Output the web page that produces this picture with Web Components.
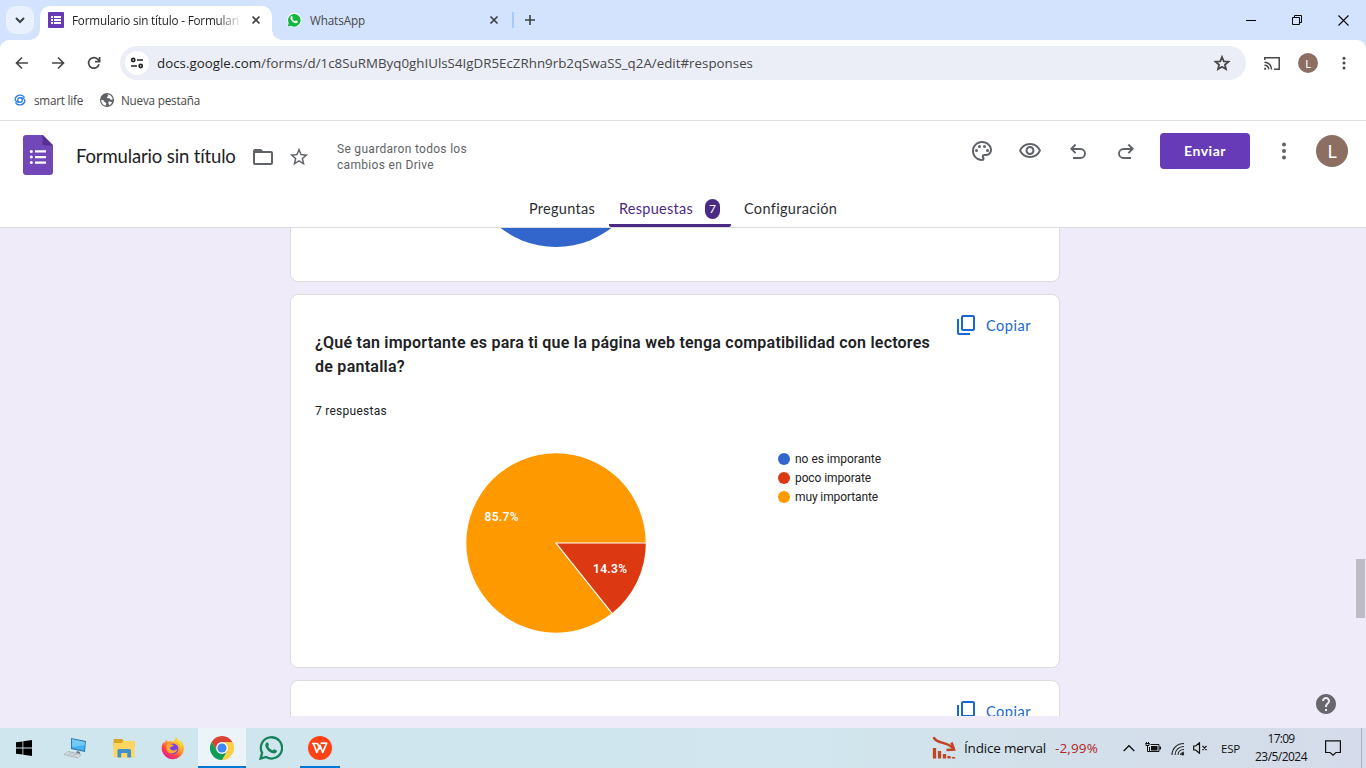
<!DOCTYPE html>
<html lang="es">
<head>
<meta charset="utf-8">
<title>Formulario sin título - Formularios de Google</title>
<style>
html,body{margin:0;height:100%;overflow:hidden}
body{font-family:"Open Sans","Noto Sans",sans-serif;color:#202124}
</style>
</head>
<body>
<desktop-screen></desktop-screen>
<script>
const ICONS = {
  down:['0 0 14 14','<path d="M3 5l4 4 4-4" fill="none" stroke="currentColor" stroke-width="2"/>'],
  formsSmall:['0 0 16 16','<rect width="16" height="16" rx="1" fill="#673ab7"/><path d="M3 4h2v2H3zM6 4h7v2H6zM3 7h2v2H3zM6 7h7v2H6zM3 10h2v2H3zM6 10h7v2H6z" fill="#fff"/>'],
  close:['0 0 10 10','<path d="M1.5 1.5l7 7M8.500 1.500l-7 7" stroke="currentColor" stroke-width="1.7"/>'],
  wa:['0 0 16 16','<path d="M1 15.500l1.100-4A7.200 7.200 0 1 1 5 14.300z" fill="#fff"/><path d="M1.700 14.600l1-3.500A6.300 6.300 0 1 1 5.100 13.700z" fill="#12b83c"/><path d="M5.300 4.300c.7-.6 1 0 1.500 1.300.2.500-.6.900-.4 1.300.6 1.100 1.400 1.800 2.500 2.300.6.200.8-.8 1.300-.7l1.500.8c.4.200-.1 1.800-1.600 1.900-2.100.1-5.400-2.600-5.700-5 0-.8.400-1.400.9-1.900z" fill="#fff"/>'],
  plus:['0 0 12 12','<path d="M6 1v10M1 6h10" stroke="currentColor" stroke-width="1.600"/>'],
  min:['0 0 10 10','<path d="M0 5.500h10" stroke="#000"/>'],
  restore:['0 0 10 10','<path d="M.5 2.500h7v7h-7zM2.500 2.500v-2h7v7h-2" fill="none" stroke="#000"/>'],
  xwin:['0 0 11 11','<path d="M.5.500l10 10M10.500.500l-10 10" stroke="#000" stroke-width="1.100"/>'],
  back:['0 0 14 14','<path d="M13 7H2M7 1.500L1.500 7 7 12.500" fill="none" stroke="currentColor" stroke-width="1.700"/>'],
  fwd:['0 0 14 14','<path d="M1 7h11M7 1.500L12.500 7 7 12.500" fill="none" stroke="currentColor" stroke-width="1.700"/>'],
  reload:['0 0 14 14','<path d="M12 8.300A5.300 5.300 0 1 1 10.800 3.300L12.300 5M12.600 1v4.600H8" fill="none" stroke="currentColor" stroke-width="1.700"/>'],
  tune:['0 0 14 12','<g fill="none" stroke="#222" stroke-width="1.700"><circle cx="3.200" cy="3" r="1.600"/><path d="M7 3h6M1 9h6"/><circle cx="10.700" cy="9" r="1.600"/></g>'],
  star:['0 0 24 24','<path fill="currentColor" d="M22 9.240l-7.190-.62L12 2 9.190 8.630 2 9.240l5.460 4.730L5.820 21 12 17.270 18.180 21l-1.630-7.030L22 9.240zM12 15.400l-3.760 2.270 1-4.280-3.320-2.880 4.380-.38L12 6.100l1.710 4.040 4.380.38-3.320 2.880 1 4.280L12 15.400z"/>'],
  starB:['0 0 24 24','<path fill="none" stroke="currentColor" stroke-width="2.400" d="M12 4l2.400 5.700 6.200.5-4.700 4.100 1.400 6L12 17.100l-5.300 3.200 1.400-6-4.700-4.100 6.200-.5z"/>'],
  cast:['0 0 16 13','<g fill="none" stroke="currentColor" stroke-width="1.500"><path d="M.8 3V.8h14.400v11.400H10M.5 5.200a7 7 0 0 1 7 7.200M.5 8.200a4 4 0 0 1 4.200 4.200"/></g><path d="M.2 10.500a2.300 2.300 0 0 1 2.200 2.200H.2z" fill="currentColor"/>'],
  dots:['0 0 24 24','<g fill="currentColor"><circle cx="12" cy="5.500" r="2"/><circle cx="12" cy="12" r="2"/><circle cx="12" cy="18.500" r="2"/></g>'],
  smart:['0 0 14 14','<g fill="none" stroke="#2b7de1" stroke-width="1.500"><path d="M12.300 4.300A6 6 0 0 0 1.300 5.500C1 8.500 4 9.700 7 9.700M1.700 9.700A6 6 0 0 0 12.700 8.500C13 5.500 10 4.300 7 4.300"/><path d="M7 4.300A2.700 2.700 0 0 0 7 9.700A2.700 2.700 0 0 0 7 4.300"/></g>'],
  globe:['0 0 14 14','<circle cx="7" cy="7" r="7" fill="#5f6368"/><path d="M1.200 7.200c1.600-.3 2.800.2 3.200 1.500.2.800 1.700.5 1.900 1.500.1.700-.5 1.400-.4 2.400-2.800-.5-4.800-2.900-4.700-5.400zM7.500 1.300c2.400.2 4.800 2.200 5.200 4.800-.7.200-1.200.8-1.900.6-1-.2-.6-1.300-1.700-1.400-1.100-.1-2 .2-2.100-.8-.1-1.200 1.300-.8 1.300-1.800 0-.6-.8-.7-.8-1.400z" fill="#fff"/><path d="M8.400 8.700c1.400-.5 2.300.4 3.700.6-.6 1.500-1.800 2.600-3.100 3 .3-1.400-1.300-2.700-.6-3.600z" fill="#fff"/>'],
  forms:['0 0 30 40','<path d="M3 0h17l10 10v27a3 3 0 0 1-3 3H3a3 3 0 0 1-3-3V3a3 3 0 0 1 3-3z" fill="#7248b9"/><path d="M19.500 0L30 10.500H22a2.500 2.500 0 0 1-2.500-2.500z" fill="#53318c"/><g fill="#fff"><circle cx="8.300" cy="16.500" r="1.500"/><circle cx="8.300" cy="22" r="1.500"/><circle cx="8.300" cy="27.500" r="1.500"/><path d="M12 15.300h11v2.300H12zM12 20.900h11v2.300H12zM12 26.400h11v2.300H12z"/></g>'],
  folder:['0 0 20 16','<path fill="currentColor" fill-rule="evenodd" d="M2 0h6l2 2h8a2 2 0 0 1 2 2v10a2 2 0 0 1-2 2H2a2 2 0 0 1-2-2V2a2 2 0 0 1 2-2zm0 4v10h16V4z"/>'],
  palette:['0 0 24 24','<path fill="currentColor" d="M12 22C6.490 22 2 17.510 2 12S6.490 2 12 2s10 4.040 10 9c0 3.310-2.690 6-6 6h-1.770c-.28 0-.5.220-.5.500 0 .120.050.230.130.330.410.470.640 1.060.640 1.670A2.500 2.500 0 0 1 12 22zm0-18c-4.410 0-8 3.590-8 8s3.590 8 8 8c.280 0 .5-.220.5-.5a.54.54 0 0 0-.14-.35c-.41-.46-.63-1.050-.63-1.650a2.500 2.500 0 0 1 2.500-2.500H16c2.210 0 4-1.790 4-4 0-3.860-3.590-7-8-7z"/><g fill="currentColor"><circle cx="6.500" cy="11.500" r="1.500"/><circle cx="9.500" cy="7.500" r="1.500"/><circle cx="14.500" cy="7.500" r="1.500"/><circle cx="17.500" cy="11.500" r="1.500"/></g>'],
  eye:['0 0 24 24','<path fill="currentColor" d="M12 6c3.790 0 7.170 2.130 8.820 5.500C19.170 14.870 15.790 17 12 17s-7.170-2.130-8.820-5.500C4.830 8.130 8.210 6 12 6m0-2C7 4 2.730 7.110 1 11.500 2.730 15.890 7 19 12 19s9.270-3.110 11-7.500C21.270 7.110 17 4 12 4zm0 5a2.500 2.500 0 0 1 0 5 2.500 2.500 0 0 1 0-5m0-2c-2.480 0-4.500 2.020-4.500 4.500S9.520 16 12 16s4.500-2.020 4.500-4.500S14.480 7 12 7z"/>'],
  undo:['0 0 16 16','<path d="M3 15h7.500a4.300 4.300 0 0 0 0-9H1.500M5.600 1.500L1.300 5.800l4.300 4.400" fill="none" stroke="currentColor" stroke-width="1.900"/>'],
  redo:['0 0 16 16','<path d="M13 15H5.500a4.300 4.300 0 0 1 0-9h9M10.400 1.500l4.300 4.300-4.300 4.400" fill="none" stroke="currentColor" stroke-width="1.900"/>'],
  copy:['0 0 18 20','<path fill="#1967d2" fill-rule="evenodd" d="M6 0h10a2 2 0 0 1 2 2v12a2 2 0 0 1-2 2H6a2 2 0 0 1-2-2V2a2 2 0 0 1 2-2zm0 2v12h10V2zM0 4h2v14h11v2H2a2 2 0 0 1-2-2z"/>'],
  help:['2 2 20 20','<path fill="#69676e" d="M12 2C6.480 2 2 6.480 2 12s4.480 10 10 10 10-4.480 10-10S17.520 2 12 2zm1 17h-2v-2h2v2zm2.070-7.750l-.9.920C13.450 12.900 13 13.500 13 15h-2v-.5c0-1.100.450-2.100 1.170-2.830l1.240-1.260c.370-.360.590-.860.590-1.410 0-1.100-.9-2-2-2s-2 .9-2 2H8c0-2.210 1.790-4 4-4s4 1.790 4 4c0 .880-.360 1.680-.930 2.250z"/>'],
  win:['0 0 16 16','<path d="M0 2.300l6.500-.9v6.200H0zM7.300 1.300L16 0v7.600H7.300zM0 8.400h6.500v6.200L0 13.700zM7.300 8.400H16V16l-8.700-1.300z"/>'],
  pc:['0 0 24 22','<path d="M8 1l15 3-1 11-14-3z" fill="#3778a8"/><path d="M9 2.300l13 2.700-.8 8.700-12-2.700z" fill="#43b4ef"/><path d="M9 2.300l13 2.700-.3 3-12.500 2z" fill="#71cbf5"/><path d="M14 14l3 1v2l-4-1z" fill="#6b7b86"/><path d="M5 14.500l13 3-3 3.500L1 17.500z" fill="#e3e8eb" stroke="#9aa5ac" stroke-width=".7"/><path d="M5.500 15.800l10 2.300M4 17l10 2.300" stroke="#a8b2b8" stroke-width=".7"/>'],
  explorer:['0 0 22 19','<path d="M1 0h8l2 2h9a1.500 1.500 0 0 1 1.500 1.500V8H.5V1z" fill="#d9a520"/><path d="M10 2h11.500v4H8z" fill="#ffd65f"/><path d="M.5 4H21.500v13a1.500 1.500 0 0 1-1.500 1.500H2A1.500 1.500 0 0 1 .5 17z" fill="#ffd65f"/><path d="M4.500 18.500v-7a1.500 1.500 0 0 1 1.500-1.500h10.500a1.500 1.500 0 0 1 1.500 1.500v7h-3.700V14H8.200v4.500z" fill="#3f91cc"/>'],
  firefox:['0 0 24 24','<defs><linearGradient id="a" x1=".85" y1=".1" x2=".2" y2="1"><stop stop-color="#ffdf3d"/><stop offset=".4" stop-color="#ff9a2a"/><stop offset=".7" stop-color="#ff3c51"/><stop offset="1" stop-color="#d8189a"/></linearGradient></defs><path d="M14.500.5c1.500 1 2 3 3.500 4.500l1-1c3 2.500 4.500 6.500 3.800 10.200A11.200 11.200 0 0 1 1 15C.2 11 1 8 2.500 6l.5 2c.5-2 1.700-3.300 2.800-4.500 0 1.400.6 2 1.300 2.300C9 4.500 11 5 12 6c2.200-1.300 2.500-3.700 2.500-5.500z" fill="url(#a)"/><circle cx="12" cy="12.700" r="5.300" fill="#7542e5"/><path d="M5.500 9C7.500 7 10.500 8 13 9.500c-1.500 1.500-4 .8-4 2.600 0 2.900 5 3.400 7.500.7-1 5.200-8.700 6.700-10.900 1.200z" fill="#ffad2c"/><path d="M13 5c5 1 7 4 6.500 8 2-2 1.500-6-.5-8l-2.500-1z" fill="#ffd93b"/>'],
  chrome:['0 0 24 24','<path d="M12 0A12 12 0 0 1 22.400 6H12L6.800 15 1.600 6A12 12 0 0 1 12 0z" fill="#dd4236"/><path d="M22.400 6A12 12 0 0 1 12 24l5.200-9L12 6z" fill="#ffcd40"/><path d="M1.600 6A12 12 0 0 0 12 24l5.200-9H6.800z" fill="#0f9d58"/><circle cx="12" cy="12" r="5.900" fill="#fff"/><circle cx="12" cy="12" r="4.600" fill="#4285f4"/>'],
  waTask:['0 0 24 24','<path d="M1.600 22.600l1.500-5.800a10.600 10.600 0 1 1 4 4.200z" fill="none" stroke="#16845b" stroke-width="2.300"/><path d="M7.400 6.800c1-1 1.700-.4 2.500 1.800.3.800-.9 1.400-.6 2 1 1.800 2.200 2.900 4 3.600.8.300 1.300-1.300 2-1l2.500 1.300c.6.400-.2 2.900-2.500 3-3.500.2-8.600-4.200-9-8 0-1.200.4-2 1.100-2.700z" fill="#16845b"/>'],
  wps:['0 0 24 24','<circle cx="12" cy="12" r="12" fill="#ff4216"/><path d="M4 7.500h5.500l2.500 6M5.500 7.500l3.300 9 3.200-7.300 2.700 7.300 4-9.300h-6" fill="none" stroke="#fff" stroke-width="1.700" stroke-linejoin="round"/>'],
  market:['0 0 24 24','<path d="M2 2c4 6.500 11 2.500 19 10" fill="none" stroke="#c34420" stroke-width="2.400" stroke-linecap="round"/><path d="M19.500 6.500l2.500 7-7.500.5" fill="none" stroke="#c34420" stroke-width="2.600"/><path d="M2.500 12v10.500M7.500 15v7.500M12.500 18v4.500M17 20v2.500M21.500 21v1.500" stroke="#c34420" stroke-width="3.300"/>'],
  up:['0 0 12 8','<path d="M.7 7L6 1.700 11.300 7" fill="none" stroke="#111" stroke-width="1.300"/>'],
  battery:['0 0 16 12','<path d="M1 1v2.500h3V1M2.500 4v5.500h2M.5 1.500h4M1.500 0v1M3.500 0v1" fill="none" stroke="#111"/><path d="M5.500 2.500h8.500v7H4.500V5" fill="none" stroke="#111"/><path d="M6 4h6.500v4.500H6zM14.500 4.500H16v3h-1.500z" fill="#111"/>'],
  wifi:['0 0 14 14','<g fill="none" stroke="#222"><path d="M1 13C1 6.500 6 1.500 13 1.500M4 13c0-5 4-8.500 9-8.500M7 13c0-3.300 2.700-5.500 6-5.500" stroke-width="1.100"/><path d="M9.500 13c0-1.800 1.500-2.800 3.500-2.800"/></g><circle cx="11.700" cy="12" r="1.500" fill="#222"/>'],
  mute:['0 0 15 12','<path d="M.7 4h2l3.800-3.300v10.600L2.700 8h-2zM9.500 3.800l4 4.400M13.500 3.800l-4 4.400" fill="none" stroke="#111" stroke-width="1.200"/>'],
  note:['0 0 16 16','<path d="M.6.800h14.800v11.700h-4.500L8 15.200l-2.900-2.700H.6z" fill="none" stroke="#111" stroke-width="1.200"/>'],
};
const define = (name, css, html) => customElements.define(name, class extends HTMLElement {
  constructor() { super(); this.attachShadow({mode:'open'}).innerHTML = `<style>${css}</style>${html}`; }
});

/* <ui-icon name w h>: inline SVG from the icon table */
customElements.define('ui-icon', class extends HTMLElement {
  connectedCallback() {
    const [vb, body] = ICONS[this.getAttribute('name')];
    const w = this.getAttribute('w'), h = this.getAttribute('h') || w;
    if (!this.shadowRoot) this.attachShadow({mode:'open'});
    this.shadowRoot.innerHTML = `<style>:host{display:block;flex:none;width:${w}px;height:${h}px}svg{display:block}</style><svg width="${w}" height="${h}" viewBox="${vb}">${body}</svg>`;
  }
});

/* <fit-text w>: single line of text tracked to a given width */
customElements.define('fit-text', class extends HTMLElement {
  connectedCallback() {
    const w = +this.getAttribute('w');
    if (!this.shadowRoot) this.attachShadow({mode:'open'});
    this.shadowRoot.innerHTML = `<style>:host{display:block;flex:none;width:${w}px;white-space:nowrap}span{display:inline-block}</style><span><slot></slot></span>`;
    const s = this.shadowRoot.querySelector('span');
    s.style.letterSpacing = '0px';
    const n = this.textContent.length;
    s.style.letterSpacing = ((w - s.getBoundingClientRect().width) / n) + 'px';
  }
});

define('user-avatar', `:host{display:flex;flex:none;align-items:center;justify-content:center;border-radius:50%;background:#8d6e63;color:#fff;font-family:Lato,sans-serif}`, `<slot></slot>`);

define('browser-tabs', `
:host{display:flex;height:40px;background:#d3e3fd;font-size:11.700px;flex:none}
.search{width:28px;height:28px;margin:6px;border-radius:10px;background:#e9f1fe;display:flex;align-items:center;justify-content:center;color:#1f1f1f}
.tab{display:flex;align-items:center;width:232px;height:34px;margin-top:6px;box-sizing:border-box}
.active{background:#fff;border-radius:10px 10px 0 0;position:relative;color:#1f1f1f;padding:0 0 6px 8px}
.active:before,.active:after{content:"";position:absolute;bottom:0;width:10px;height:10px;left:-10px;background:radial-gradient(circle at 0 0,transparent 9.5px,#fff 10px)}
.active:after{left:auto;right:-10px;background:radial-gradient(circle at 100% 0,transparent 9.5px,#fff 10px)}
.clip{width:167px;overflow:hidden;margin-left:8px;-webkit-mask:linear-gradient(90deg,#000 146px,transparent 170px)}
.idle{padding-left:14px;color:#474747;width:241px;margin-top:0;height:40px}
.idle fit-text{margin-left:8px}
.idle .x{margin-left:124px}
.x{margin-left:12px}
ui-icon{color:#3c4043}
.line{width:2px;height:16px;margin:12px 10px 0 -1px;background:#a8c7fa}
.add{display:flex;align-items:center}
.ctl{display:flex;margin-left:auto}
.ctl div{width:46px;display:flex;align-items:center;justify-content:center}
`, `<div class="search"><ui-icon name="down" w="14"></ui-icon></div>
<div class="tab active"><ui-icon name="formsSmall" w="16"></ui-icon><div class="clip"><fit-text w="167">Formulario sin título - Formulari</fit-text></div><ui-icon class="x" name="close" w="10"></ui-icon></div>
<div class="tab idle"><ui-icon name="wa" w="16"></ui-icon><fit-text w="55">WhatsApp</fit-text><ui-icon class="x" name="close" w="10"></ui-icon></div>
<div class="line"></div><div class="add"><ui-icon name="plus" w="12"></ui-icon></div>
<div class="ctl"><div><ui-icon name="min" w="10"></ui-icon></div><div><ui-icon name="restore" w="10"></ui-icon></div><div><ui-icon name="xwin" w="11"></ui-icon></div></div>`);

define('browser-toolbar', `
:host{display:block;flex:none;height:80px;background:#d3e3fd;border-bottom:1px solid #dfe1e5}
.all{background:#fff;height:80px;border-radius:9px 9px 0 0}
.row{display:flex;align-items:center;height:46px;color:#474747}
.nav{display:flex;gap:22px;padding:0 19px 0 15px}
.omni{width:1126px;height:34px;border-radius:17px;background:#ebeef7;display:flex;align-items:center;box-sizing:border-box;padding:0 15px 0 5px;font-size:13.300px}
.chip{width:24px;height:24px;border-radius:50%;background:#fff;display:flex;align-items:center;justify-content:center;margin-right:8px}
.dom{color:#1f1f1f}.fill{flex:1}
.cast{margin:0 18px 0 18px}
.more{margin-left:17px}
user-avatar{width:20px;height:20px;font-size:11px}
.marks{height:27px;font-size:11.700px;display:flex;align-items:center;padding-left:14px;color:#474747}
`, `<div class="all"><div class="row"><div class="nav"><ui-icon name="back" w="14"></ui-icon><ui-icon name="fwd" w="14"></ui-icon><ui-icon name="reload" w="14"></ui-icon></div>
<div class="omni"><div class="chip"><ui-icon name="tune" w="14" h="12"></ui-icon></div><fit-text w="596">​<span class="dom">docs.google.com</span>/forms/d/1c8SuRMByq0ghIUlsS4IgDR5EcZRhn9rb2qSwaSS_q2A/edit#responses</fit-text><div class="fill"></div><ui-icon name="starB" w="18"></ui-icon></div>
<ui-icon class="cast" name="cast" w="16" h="13"></ui-icon><user-avatar>L</user-avatar><ui-icon class="more" name="dots" w="18"></ui-icon></div>
<div class="marks"><ui-icon name="smart" w="12"></ui-icon><fit-text w="49" style="margin:0 17px 0 8px">smart life</fit-text><ui-icon name="globe" w="14"></ui-icon><fit-text w="79" style="margin-left:7px">Nueva pestaña</fit-text></div></div>`);

define('form-header', `
:host{display:block;flex:none;height:106px;background:#fff;border-bottom:1px solid #dadce0;font-family:Lato,sans-serif}
.row{display:flex;height:66px;align-items:center;padding:0 18px 0 23px;color:#5f6368;box-sizing:border-box}
.title{color:#202124;font-size:18.500px;margin:4px 17px 0 23px;line-height:24px}
.saved{font:12px/16px Roboto,sans-serif;margin:5px auto 0 27px}
.acts{display:flex;align-items:center;height:36px;margin-bottom:6px}
button{all:unset;width:90px;height:36px;border-radius:4px;background:#673ab7;color:#fff;font-weight:700;font-size:14px;display:flex;align-items:center;justify-content:center;margin:0 22px}
button fit-text{margin-top:-2px}
user-avatar{width:32px;height:32px;font-size:18px;margin-left:24px}
.tabs{display:flex;height:40px;padding-left:529px;font-size:14.500px;font-weight:400;color:#2c2f33}
.t{display:flex;align-items:center;height:43px}
.on{color:#4b2a86;margin:0 14px 0 14px;height:40px;padding:6px 10px 0;border-bottom:3px solid #4b2a86;box-sizing:border-box;border-radius:0 0 2px 2px}
.badge{width:15px;height:20px;border-radius:8px;background:#4b2a86;color:#fff;font-size:12px;text-align:center;line-height:20px;margin:0 1px 0 12px}
.last{margin-left:-1px}
`, `<div class="row"><ui-icon name="forms" w="30" h="40" style="margin-top:2px"></ui-icon><fit-text class="title" w="160">Formulario sin título</fit-text><ui-icon name="folder" w="20" h="16" style="margin-top:6px"></ui-icon><ui-icon name="star" w="22" style="margin:5px 0 0 15px"></ui-icon>
<div class="saved"><fit-text w="130">Se guardaron todos los</fit-text><fit-text w="97">cambios en Drive</fit-text></div>
<div class="acts"><ui-icon name="palette" w="24"></ui-icon><ui-icon name="eye" w="24" style="margin-left:24px"></ui-icon><ui-icon name="undo" w="16" style="margin-left:28px"></ui-icon><ui-icon name="redo" w="16" style="margin-left:32px"></ui-icon><button style="margin-left:26px"><fit-text w="42">Enviar</fit-text></button><ui-icon name="dots" w="24"></ui-icon><user-avatar style="margin-left:20px">L</user-avatar></div></div>
<div class="tabs"><div class="t"><fit-text w="66">Preguntas</fit-text></div><div class="t on"><fit-text w="74">Respuestas</fit-text><div class="badge">7</div></div><div class="t last"><fit-text w="93">Configuración</fit-text></div></div>`);

define('response-card', `
:host{display:block;flex:none;width:770px;height:374px;box-sizing:border-box;border:1px solid #dadce0;border-radius:8px;background:#fff;padding:0 28px 0 24px;font-family:Roboto,sans-serif}
.head{display:flex;justify-content:space-between;height:104px}
.q{padding-top:36px;font-size:16px;line-height:24px;font-weight:600}
.copy{display:flex;align-items:center;height:60px;gap:11px;color:#1967d2;font:14.500px Lato,sans-serif}
.n{height:24px;line-height:24px;font-size:12px;color:#202124}
.chart{display:flex;padding:30px 0 0 151px}
`, `<div class="head"><div class="q"><slot name="question"></slot></div><div class="copy"><ui-icon name="copy" w="18" h="20"></ui-icon><fit-text w="45">Copiar</fit-text></div></div><div class="n"><slot name="count"></slot></div><div class="chart"><slot></slot></div>`);

define('chart-legend', `
:host{display:block;margin:-4px 0 0 132px;font-size:12px;color:#222}
div{display:flex;align-items:center;height:19px}
i{width:12px;height:12px;border-radius:50%;margin-right:5px}
`, `<div><i style="background:#3366cc"></i><fit-text w="86">no es imporante</fit-text></div><div><i style="background:#dc3912"></i><fit-text w="76">poco imporate</fit-text></div><div><i style="background:#ff9900"></i><fit-text w="83">muy importante</fit-text></div>`);

define('pie-chart', `:host{display:block}svg{display:block}text{font:600 12px Roboto,sans-serif;fill:#fff}`,
`<svg width="180" height="180"><circle cx="90" cy="90" r="89.700" fill="#f90"/><path d="M90 90H179.700A89.700 89.700 0 0 1 146 160.100Z" fill="#dc3912"/><path d="M180 90H90L146.100 160.400" fill="none" stroke="#fff" stroke-width="1.200"/><text x="18.500" y="68" textLength="34">85.7%</text><text x="127" y="120" textLength="34">14.3%</text></svg>`);

define('pie-full', `:host{display:block;width:180px;height:180px;border-radius:50%;background:#36c}`, ``);

define('form-responses', `
:host{display:block;flex:none;height:500px;background:#efebf8}
.view{position:relative;height:488px;overflow:hidden;display:flex;flex-direction:column;align-items:center;gap:12px;padding-right:16px}
.view>:first-child{margin-top:-320px}
.help{position:absolute;left:1316px;top:466px}
.bar{position:absolute;left:1356px;top:331px;width:9px;height:59px;background:#bdbbc4}
`, `<div class="view"><response-card><pie-full></pie-full></response-card>
<response-card><div slot="question"><fit-text w="615">¿Qué tan importante es para ti que la página web tenga compatibilidad con lectores</fit-text><fit-text w="90">de pantalla?</fit-text></div><fit-text w="72" slot="count">7 respuestas</fit-text><pie-chart></pie-chart><chart-legend></chart-legend></response-card>
<response-card></response-card><ui-icon class="help" name="help" w="20"></ui-icon><div class="bar"></div></div>`);

define('windows-taskbar', `
:host{display:flex;flex:none;height:40px;font-size:12px;color:#111;background:linear-gradient(90deg,#cfe6ee,#d1e6ee 60%,#d2e0ea 75%,#d5dbea)}
.b{width:48px;height:40px;display:flex;align-items:center;justify-content:center;margin-right:1px;position:relative}
.start{margin-right:3px}
.on{background:#ebf4f9;box-shadow:inset 0 -2px #0078d4}
.run:after{content:"";position:absolute;left:4px;right:4px;bottom:0;height:2px;background:#0078d4}
.tray{margin-left:auto;display:flex;align-items:center;padding-right:25px;position:relative}
.tray:after{content:"";position:absolute;right:4px;top:0;bottom:0;width:1px;background:#a9b2bf}
.red{color:#b3261e}
.clock{line-height:18px;width:52px;display:flex;flex-direction:column;align-items:center;margin:0 18px 0 15px}
`, `<div class="b start"><ui-icon name="win" w="16"></ui-icon></div><div class="b"><ui-icon name="pc" w="24" h="22"></ui-icon></div><div class="b"><ui-icon name="explorer" w="22" h="19"></ui-icon></div><div class="b"><ui-icon name="firefox" w="24"></ui-icon></div><div class="b on"><ui-icon name="chrome" w="24"></ui-icon></div><div class="b"><ui-icon name="waTask" w="24"></ui-icon></div><div class="b run"><ui-icon name="wps" w="24"></ui-icon></div>
<div class="tray"><ui-icon name="market" w="24" style="margin-right:8px"></ui-icon><fit-text w="82" style="font-size:13.500px">Índice merval</fit-text><fit-text class="red" w="43" style="margin:0 25px 0 9px;font-size:13.500px">-2,99%</fit-text><ui-icon name="up" w="12" h="8"></ui-icon><ui-icon name="battery" w="16" h="12" style="margin-left:10px"></ui-icon><ui-icon name="wifi" w="14" style="margin:2px 8px 0 10px"></ui-icon><ui-icon name="mute" w="15" h="12"></ui-icon><fit-text w="19" style="margin-left:13px;font-size:11.500px">ESP</fit-text>
<div class="clock"><fit-text w="27">17:09</fit-text><fit-text w="52">23/5/2024</fit-text></div><ui-icon name="note" w="16"></ui-icon></div>`);

define('desktop-screen', `:host{display:flex;flex-direction:column;width:1366px;height:768px;overflow:hidden;background:#fff}`,
`<browser-tabs></browser-tabs><browser-toolbar></browser-toolbar><form-header></form-header><form-responses></form-responses><windows-taskbar></windows-taskbar>`);
</script>
</body>
</html>
